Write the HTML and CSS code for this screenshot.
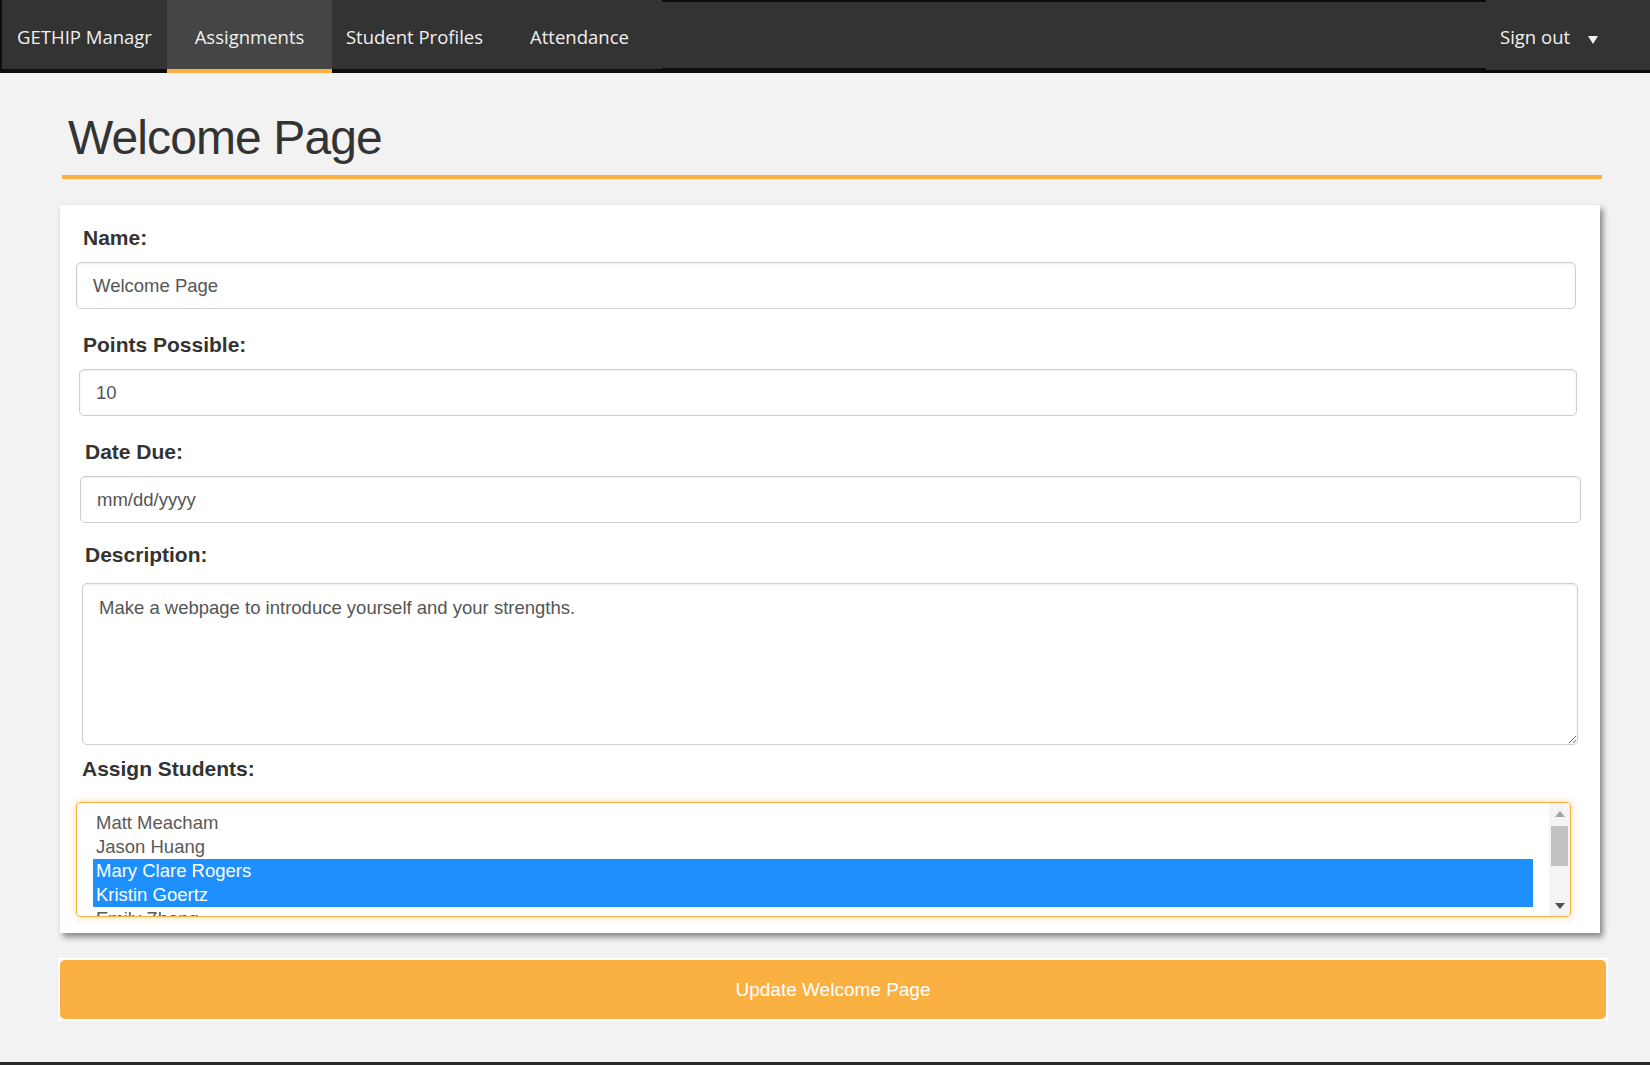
FILE: index.html
```html
<!DOCTYPE html>
<html lang="en">
<head>
<meta charset="utf-8">
<title>Welcome Page</title>
<link rel="stylesheet" href="styles.css">
</head>
<body>
<nav class="topnav">
  <a class="tab">GETHIP Managr</a>
  <a class="tab active">Assignments</a>
  <a class="tab">Student Profiles</a>
  <a class="tab">Attendance</a>
  <div class="spacer"></div>
  <a class="signout">Sign out <span class="caret"></span></a>
</nav>
<main class="main">
  <header class="page-head">
    <h1>Welcome Page</h1>
  </header>
  <form class="card">
    <div class="group">
      <label class="lbl">Name:</label>
      <input class="field" type="text" value="Welcome Page">
    </div>
    <div class="group">
      <label class="lbl">Points Possible:</label>
      <input class="field f-points" type="text" value="10">
    </div>
    <div class="group">
      <label class="lbl lbl-shift">Date Due:</label>
      <input class="field f-date" type="text" value="mm/dd/yyyy">
    </div>
    <div class="group">
      <label class="lbl lbl-shift lbl-desc">Description:</label>
      <textarea class="field area">Make a webpage to introduce yourself and your strengths.</textarea>
    </div>
    <div class="group last">
      <label class="lbl lbl-assign">Assign Students:</label>
      <div class="multi">
        <div class="list">
          <div class="opt">Matt Meacham</div>
          <div class="opt">Jason Huang</div>
          <div class="opt sel">Mary Clare Rogers</div>
          <div class="opt sel">Kristin Goertz</div>
          <div class="opt">Emily Zhang</div>
        </div>
        <div class="sbar">
          <div class="arr up"></div>
          <div class="thumb"></div>
          <div class="track"></div>
          <div class="arr down"></div>
        </div>
      </div>
    </div>
  </form>
  <div class="btn-wrap">
    <button class="btn" type="button">Update Welcome Page</button>
  </div>
</main>
</body>
</html>
```

FILE: styles.css
```css
* { box-sizing: border-box; }
html, body { margin: 0; padding: 0; }
body {
  background: #f2f2f2;
  font-family: "Liberation Sans", Arial, sans-serif;
  height: 100vh;
  display: flex;
  flex-direction: column;
}

/* NAV */
.topnav {
  display: flex;
  height: 73px;
  background: #0d0d0d;
  border-left: 2px solid #0d0d0d;
  flex: none;
}
.tab, .signout {
  font-family: "Open Sans", sans-serif;
  font-size: 18.5px;
  color: #f0f0f0;
  text-decoration: none;
  height: 69px;
  line-height: 65px;
  padding-top: 4px;
  background: #333;
  text-align: center;
}
.tab { width: 165px; }
.tab.active {
  background: #454545;
  height: 73px;
  border-bottom: 4px solid #fbb040;
}
.spacer {
  flex: 1;
  margin-top: 2px;
  height: 66px;
  background: #333;
}
.signout {
  width: 164px;
  height: 70px;
  text-align: left;
  padding-left: 14px;
}
.caret {
  display: inline-block;
  margin-left: 13px;
  width: 0; height: 0;
  border-left: 5px solid transparent;
  border-right: 5px solid transparent;
  border-top: 8px solid #f0f0f0;
  vertical-align: 0;
}

/* MAIN */
.main {
  flex: 1;
  padding: 0 42px 0 58px;
  border-bottom: 3px solid #2a2a2a;
}
.page-head {
  margin: 37px 6px 0 4px;
  padding-bottom: 9px;
  border-bottom: 4px solid #fbb040;
}
.page-head h1 {
  margin: 0;
  padding-left: 6px;
  font-family: "Liberation Sans", Arial, sans-serif;
  font-weight: normal;
  font-size: 48px;
  letter-spacing: -0.9px;
  line-height: 56px;
  color: #333;
}

.card {
  margin: 26px 0 0 2px;
  width: 1540px;
  background: #fff;
  padding: 21px 24px 16px 16px;
  box-shadow: 3px 4px 6px rgba(0, 0, 0, 0.45);
}
.group { margin-bottom: 24px; }
.group.last { margin-bottom: 0; }
.lbl {
  display: block;
  font-weight: bold;
  font-size: 21px;
  line-height: 24px;
  color: #333;
  padding-left: 7px;
  margin-bottom: 12px;
}
.lbl-shift { padding-left: 9px; }
.lbl-desc { margin-top: -4px; margin-bottom: 16px; }
.lbl-assign { margin-top: -12px; margin-bottom: 21px; padding-left: 6px; }
.field {
  display: block;
  width: 100%;
  height: 47px;
  border: 1px solid #cfcfcf;
  border-radius: 5px;
  box-shadow: inset 0 1px 2px rgba(0, 0, 0, 0.08);
  padding: 0 16px;
  font-family: "Liberation Sans", Arial, sans-serif;
  font-size: 18.5px;
  color: #555;
  background: #fff;
  outline: none;
}
.f-points { margin-left: 3px; width: calc(100% - 2px); }
.f-date { margin-left: 4px; width: calc(100% + 1px); }
.area {
  margin-left: 6px;
  width: calc(100% - 4px);
  height: 162px;
  padding: 11px 16px;
  line-height: 25px;
  resize: vertical;
}

.multi {
  display: flex;
  height: 115px;
  margin-right: 5px;
  border: 1px solid #f6b04a;
  border-radius: 4px;
  box-shadow: 0 0 7px rgba(251, 176, 64, 0.55);
  overflow: hidden;
}
.list {
  flex: 1;
  padding: 8px 16px 0 16px;
  overflow: hidden;
}
.opt {
  height: 24px;
  line-height: 24px;
  padding-left: 3px;
  font-size: 18.5px;
  color: #5a5a5a;
  white-space: nowrap;
}
.opt.sel {
  background: #1e8fff;
  color: #fff;
}
.sbar {
  width: 21px;
  background: #f4f4f4;
  display: flex;
  flex-direction: column;
  align-items: center;
}
.arr {
  width: 0; height: 0;
  border-left: 5px solid transparent;
  border-right: 5px solid transparent;
}
.arr.up {
  margin-top: 8px;
  border-bottom: 6px solid #a3a3a3;
}
.thumb {
  margin-top: 9px;
  width: 17px;
  height: 40px;
  background: #c1c1c1;
}
.track { flex: 1; }
.arr.down {
  margin-bottom: 7px;
  border-top: 6px solid #505050;
}

.btn-wrap {
  margin-top: 25px;
  background: #fff;
  padding: 2px;
}
.btn {
  display: block;
  width: 100%;
  height: 59px;
  border: 0;
  border-radius: 5px;
  background: #fbb042;
  color: #fff;
  font-family: "Liberation Sans", Arial, sans-serif;
  font-size: 19px;
  padding: 0;
}
```
